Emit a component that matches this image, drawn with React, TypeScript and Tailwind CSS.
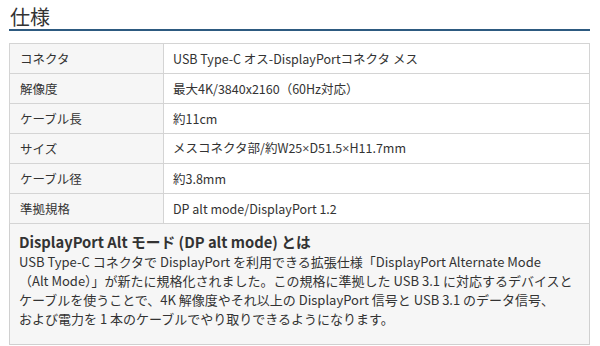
const specs: [string, React.ReactNode][] = [
  ['コネクタ', 'USB Type-C オス-DisplayPortコネクタ メス'],
  ['解像度', '最大4K/3840x2160（60Hz対応）'],
  ['ケーブル長', '約11cm'],
  ['サイズ', (
    <>
      メスコネクタ部/約W25<span className="font-['Open_Sans']">×</span>D51.5<span className="font-['Open_Sans']">×</span>H11.7mm
    </>
  )],
  ['ケーブル径', '約3.8mm'],
  ['準拠規格', 'DP alt mode/DisplayPort 1.2'],
];

const bodyLines = [
  'USB Type-C コネクタで DisplayPort を利用できる拡張仕様「DisplayPort Alternate Mode',
  '（Alt Mode）」が新たに規格化されました。この規格に準拠した USB 3.1 に対応するデバイスと',
  'ケーブルを使うことで、4K 解像度やそれ以上の DisplayPort 信号と USB 3.1 のデータ信号、',
  'および電力を 1 本のケーブルでやり取りできるようになります。',
];

export default function App() {
  return (
    <div
      className="w-[600px] h-[346px] bg-white text-[#333] overflow-hidden"
      style={{ fontFamily: '"Noto Sans CJK JP", "Noto Sans", sans-serif' }}
    >
      <div className="pl-[9px] pr-[10px] pt-[5px]">
        <h2 className="text-[20px] leading-[24px] border-b-2 border-[#2d5a80] h-[26px] pl-[1px]">仕様</h2>
        <table className="mt-[12px] w-[581px] border-collapse text-[12.5px]">
          <tbody>
            {specs.map(([k, v]) => (
              <tr key={k} className="h-[30px]">
                <td className="w-[154px] border border-[#d4d4d4] bg-[#f6f6f6] pl-[10px] pt-px">{k}</td>
                <td className="border border-[#d4d4d4] pl-[9px] pt-px">{v}</td>
              </tr>
            ))}
          </tbody>
        </table>
        <div className="w-[581px] h-[121px] border border-t-0 border-[#d0d0d0] bg-[#f6f6f6] pl-[9px] pt-[8px]">
          <div className="text-[14.75px] font-bold leading-[20px]">DisplayPort Alt モード (DP alt mode) とは</div>
          <div className="text-[13px] leading-[19px] whitespace-nowrap">
            {bodyLines.map((l) => (
              <div key={l}>{l}</div>
            ))}
          </div>
        </div>
      </div>
    </div>
  );
}
